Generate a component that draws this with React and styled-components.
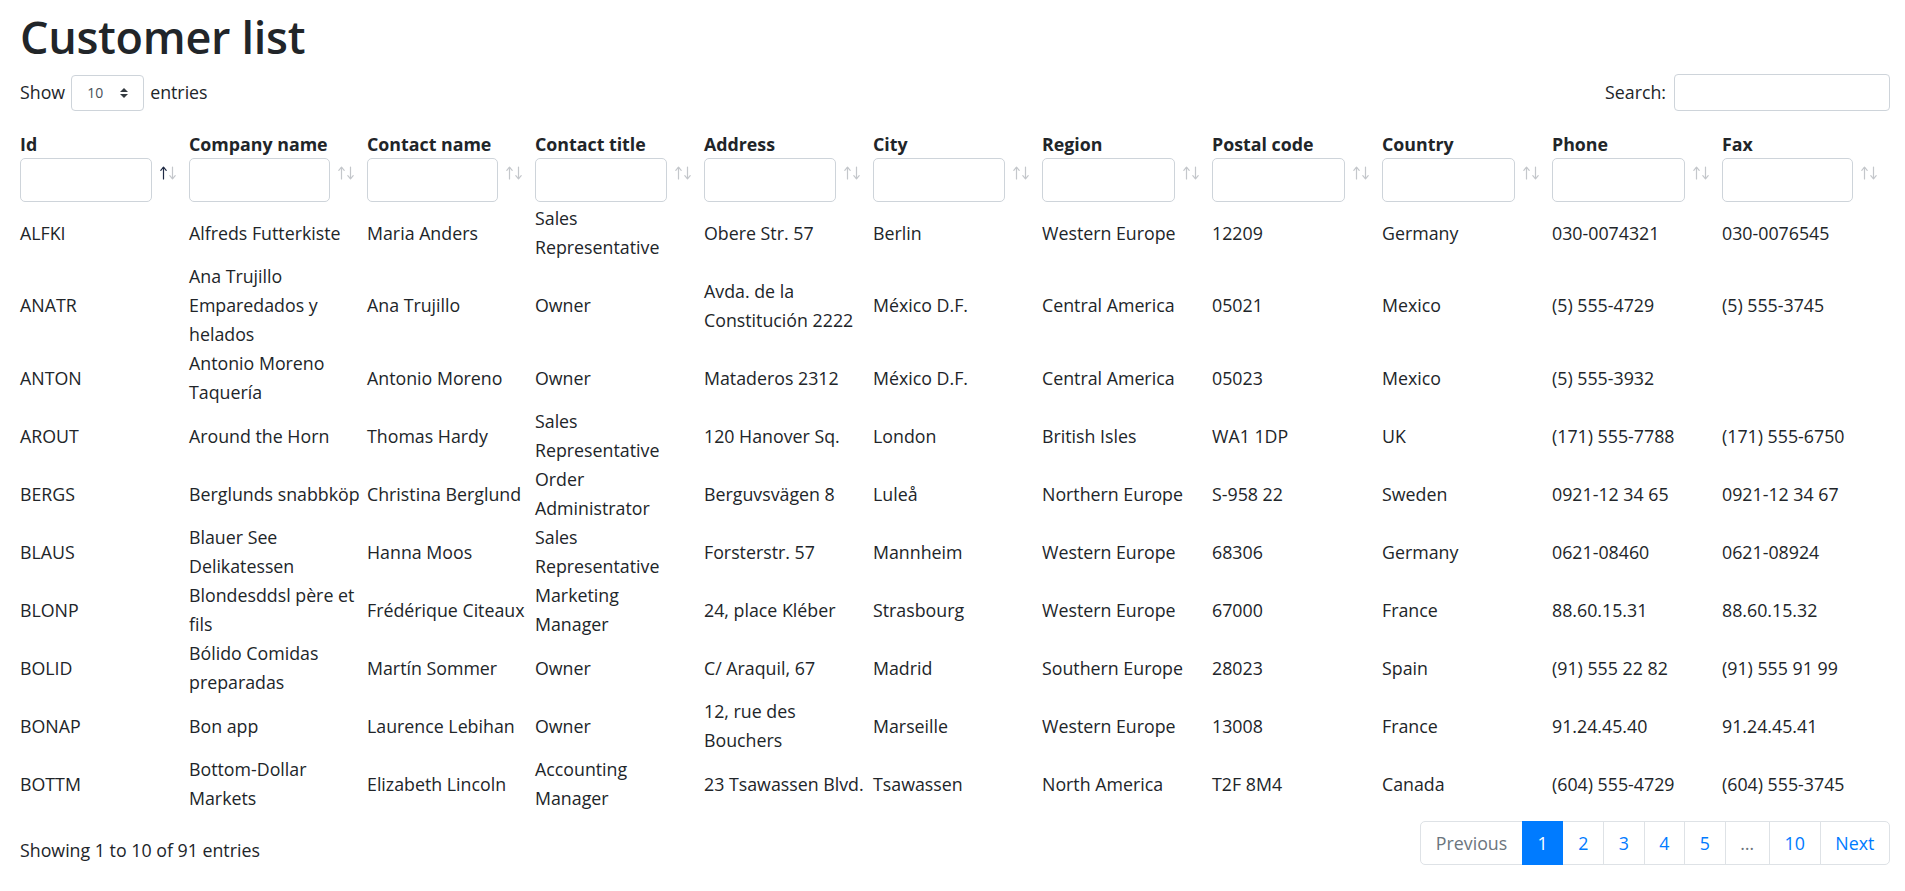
import React from "react";
import styled, { createGlobalStyle } from "styled-components";

const GlobalStyle = createGlobalStyle`
  body {
    margin: 0;
    background: #ffffff;
    color: #212529;
    font-family: "Open Sans", "Noto Sans", sans-serif;
    font-size: 17.8px;
    line-height: 28.5px;
  }
  * {
    box-sizing: border-box;
  }
`;

const Page = styled.div`
  padding: 9px 15px 24px 20px;
`;

const Title = styled.h1`
  margin: 0 0 10px;
  font-size: 45px;
  font-weight: 600;
  line-height: 55px;
  letter-spacing: -0.3px;
`;

const Toolbar = styled.div`
  display: flex;
  justify-content: space-between;
  align-items: center;
  height: 37px;
`;

const ToolLabel = styled.label`
  display: flex;
  align-items: center;
  gap: ${(p) => p.$gap || 6}px;
  font-weight: 400;
`;

const SelectWrap = styled.div`
  position: relative;
  width: 73px;
  height: 36px;
`;

const Select = styled.select`
  appearance: none;
  width: 100%;
  height: 100%;
  padding: 0 0 0 15px;
  border: 1px solid #ced4da;
  border-radius: 4px;
  background: #ffffff;
  color: #495057;
  font-family: inherit;
  font-size: 14px;
`;

const SelectIcon = styled.svg`
  position: absolute;
  right: 16px;
  top: 13px;
  pointer-events: none;
`;

const SearchInput = styled.input`
  width: 216px;
  height: 37px;
  border: 1px solid #ced4da;
  border-radius: 4px;
  font-family: inherit;
`;

const Table = styled.table`
  width: 1870px;
  margin-top: 19px;
  table-layout: fixed;
  border-collapse: collapse;
  border-spacing: 0;
`;

const HeadCell = styled.th`
  padding: 0 12px 2px 0;
  text-align: left;
  vertical-align: bottom;
  font-weight: 700;
`;

const HeadLabel = styled.div`
  line-height: 28px;
  white-space: nowrap;
`;

const FilterRow = styled.div`
  display: flex;
  align-items: center;
  gap: 8px;
`;

const FilterInput = styled.input`
  flex: 1;
  min-width: 0;
  height: 44px;
  border: 1px solid #ced4da;
  border-radius: 5px;
  font-family: inherit;
`;

const SortIcon = styled.svg`
  flex: none;
  margin-bottom: 14px;
`;

const Cell = styled.td`
  padding: 0 2px 0 0;
  vertical-align: middle;
  white-space: pre;
  line-height: 29px;
`;

const Footer = styled.div`
  display: flex;
  justify-content: space-between;
  align-items: flex-start;
  margin-top: 8px;
`;

const Info = styled.div`
  padding-top: 15px;
`;

const Pager = styled.ul`
  display: flex;
  list-style: none;
  margin: 0;
  padding: 0;
`;

const PageItem = styled.li`
  margin-left: -1px;

  &:first-child {
    margin-left: 0;
  }
  &:first-child a {
    border-radius: 5px 0 0 5px;
  }
  &:last-child a {
    border-radius: 0 5px 5px 0;
  }
`;

const PageLink = styled.a`
  display: block;
  height: 44px;
  padding: 0 14.7px;
  line-height: 42px;
  border: 1px solid ${(p) => (p.$active ? "#007bff" : "#dee2e6")};
  background: ${(p) => (p.$active ? "#007bff" : "#ffffff")};
  color: ${(p) => (p.$active ? "#ffffff" : p.$muted ? "#6c757d" : "#007bff")};
  text-decoration: none;
  position: relative;
  z-index: ${(p) => (p.$active ? 1 : 0)};
`;

const columns = [
  { label: "Id", width: 169, sorted: true },
  { label: "Company name", width: 178 },
  { label: "Contact name", width: 168 },
  { label: "Contact title", width: 169 },
  { label: "Address", width: 169 },
  { label: "City", width: 169 },
  { label: "Region", width: 170 },
  { label: "Postal code", width: 170 },
  { label: "Country", width: 170 },
  { label: "Phone", width: 170 },
  { label: "Fax", width: 168 },
];

const customers = [
  ["ALFKI", "Alfreds Futterkiste", "Maria Anders", "Sales\nRepresentative", "Obere Str. 57", "Berlin", "Western Europe", "12209", "Germany", "030-0074321", "030-0076545"],
  ["ANATR", "Ana Trujillo\nEmparedados y\nhelados", "Ana Trujillo", "Owner", "Avda. de la\nConstitución 2222", "México D.F.", "Central America", "05021", "Mexico", "(5) 555-4729", "(5) 555-3745"],
  ["ANTON", "Antonio Moreno\nTaquería", "Antonio Moreno", "Owner", "Mataderos 2312", "México D.F.", "Central America", "05023", "Mexico", "(5) 555-3932", ""],
  ["AROUT", "Around the Horn", "Thomas Hardy", "Sales\nRepresentative", "120 Hanover Sq.", "London", "British Isles", "WA1 1DP", "UK", "(171) 555-7788", "(171) 555-6750"],
  ["BERGS", "Berglunds snabbköp", "Christina Berglund", "Order\nAdministrator", "Berguvsvägen 8", "Luleå", "Northern Europe", "S-958 22", "Sweden", "0921-12 34 65", "0921-12 34 67"],
  ["BLAUS", "Blauer See\nDelikatessen", "Hanna Moos", "Sales\nRepresentative", "Forsterstr. 57", "Mannheim", "Western Europe", "68306", "Germany", "0621-08460", "0621-08924"],
  ["BLONP", "Blondesddsl père et\nfils", "Frédérique Citeaux", "Marketing\nManager", "24, place Kléber", "Strasbourg", "Western Europe", "67000", "France", "88.60.15.31", "88.60.15.32"],
  ["BOLID", "Bólido Comidas\npreparadas", "Martín Sommer", "Owner", "C/ Araquil, 67", "Madrid", "Southern Europe", "28023", "Spain", "(91) 555 22 82", "(91) 555 91 99"],
  ["BONAP", "Bon app", "Laurence Lebihan", "Owner", "12, rue des\nBouchers", "Marseille", "Western Europe", "13008", "France", "91.24.45.40", "91.24.45.41"],
  ["BOTTM", "Bottom-Dollar\nMarkets", "Elizabeth Lincoln", "Accounting\nManager", "23 Tsawassen Blvd.", "Tsawassen", "North America", "T2F 8M4", "Canada", "(604) 555-4729", "(604) 555-3745"],
];

const pages = [
  { label: "Previous", muted: true },
  { label: "1", active: true },
  { label: "2" },
  { label: "3" },
  { label: "4" },
  { label: "5" },
  { label: "…", muted: true },
  { label: "10" },
  { label: "Next" },
];

function SortArrows({ active }) {
  const faint = "#c4c7cb";
  return (
    <SortIcon width="17" height="14" viewBox="0 0 17 14">
      <g fill="none" strokeWidth="1.2" strokeLinecap="round" strokeLinejoin="round">
        <g stroke={active ? "#1f2a44" : faint}>
          <path d="M3.5 13V1.5" />
          <path d="M0.8 4.3L3.5 1.2L6.2 4.3" />
        </g>
        <g stroke={faint}>
          <path d="M12.5 1V12.5" />
          <path d="M9.8 9.7L12.5 12.8L15.2 9.7" />
        </g>
      </g>
    </SortIcon>
  );
}

function App() {
  return (
    <>
      <GlobalStyle />
      <Page>
        <Title>Customer list</Title>
        <Toolbar>
          <ToolLabel>
            Show
            <SelectWrap>
              <Select defaultValue="10">
                <option value="10">10</option>
                <option value="25">25</option>
                <option value="50">50</option>
                <option value="100">100</option>
              </Select>
              <SelectIcon width="8" height="10" viewBox="0 0 4 5">
                <path fill="#343a40" d="M2 0L0 2h4zm0 5L0 3h4z" />
              </SelectIcon>
            </SelectWrap>
            entries
          </ToolLabel>
          <ToolLabel $gap={8}>
            Search:
            <SearchInput type="search" />
          </ToolLabel>
        </Toolbar>

        <Table>
          <colgroup>
            {columns.map((c) => (
              <col key={c.label} width={c.width} />
            ))}
          </colgroup>
          <thead>
            <tr>
              {columns.map((c) => (
                <HeadCell key={c.label}>
                  <HeadLabel>{c.label}</HeadLabel>
                  <FilterRow>
                    <FilterInput type="text" />
                    <SortArrows active={c.sorted} />
                  </FilterRow>
                </HeadCell>
              ))}
            </tr>
          </thead>
          <tbody>
            {customers.map((row) => (
              <tr key={row[0]}>
                {row.map((value, i) => (
                  <Cell key={i}>{value}</Cell>
                ))}
              </tr>
            ))}
          </tbody>
        </Table>

        <Footer>
          <Info>Showing 1 to 10 of 91 entries</Info>
          <Pager>
            {pages.map((p) => (
              <PageItem key={p.label}>
                <PageLink href="#" $active={p.active} $muted={p.muted}>
                  {p.label}
                </PageLink>
              </PageItem>
            ))}
          </Pager>
        </Footer>
      </Page>
    </>
  );
}

export default App;
